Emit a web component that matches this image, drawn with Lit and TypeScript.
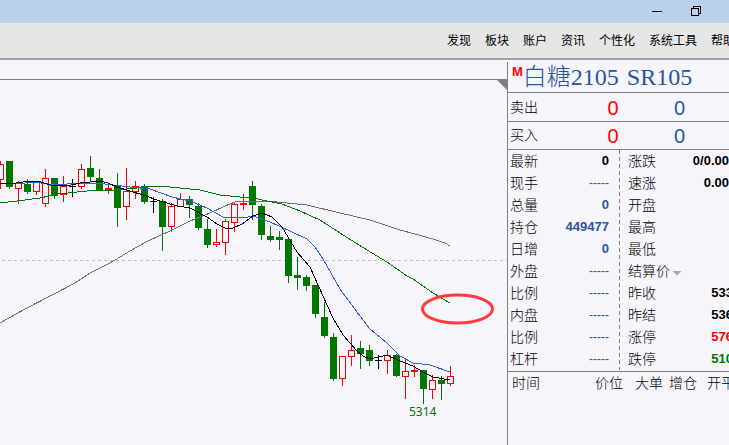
import { LitElement, html, svg, css, nothing } from "lit";
import { customElement } from "lit/decorators.js";
import { classMap } from "lit/directives/class-map.js";

type Kind = "up" | "down" | "flat-up" | "doji";
// high, body top, body bottom, low, kind
type Candle = [number, number, number, number, Kind];

const STEP = 9;

const CANDLES: Candle[] = [
  [161, 164, 180, 189, "up"],
  [161, 161, 187, 189, "down"],
  [181, 183, 189, 204, "up"],
  [179, 184, 192, 194, "down"],
  [181, 181, 192, 195, "up"],
  [169, 178, 204, 207, "up"],
  [178, 178, 196, 199, "down"],
  [176, 186, 195, 202, "up"],
  [179, 186, 187, 197, "doji"],
  [164, 169, 187, 189, "up"],
  [156, 168, 177, 181, "down"],
  [169, 178, 190, 190, "down"],
  [183, 188, 190, 194, "flat-up"],
  [173, 186, 208, 227, "down"],
  [168, 191, 207, 220, "up"],
  [181, 186, 192, 199, "up"],
  [184, 186, 202, 204, "down"],
  [197, 201, 202, 213, "doji"],
  [199, 201, 227, 251, "down"],
  [203, 206, 227, 232, "up"],
  [193, 199, 207, 207, "up"],
  [196, 199, 205, 218, "down"],
  [203, 206, 228, 230, "down"],
  [219, 229, 245, 248, "down"],
  [229, 242, 245, 247, "up"],
  [219, 221, 243, 255, "up"],
  [203, 204, 223, 232, "up"],
  [194, 203, 205, 210, "flat-up"],
  [181, 186, 205, 220, "down"],
  [204, 206, 235, 240, "down"],
  [226, 236, 240, 242, "down"],
  [231, 237, 240, 250, "down"],
  [239, 239, 276, 283, "down"],
  [257, 275, 278, 290, "down"],
  [275, 277, 286, 291, "down"],
  [285, 285, 314, 318, "down"],
  [302, 317, 336, 338, "down"],
  [333, 337, 379, 381, "down"],
  [356, 356, 379, 386, "up"],
  [335, 350, 357, 366, "up"],
  [341, 348, 354, 369, "down"],
  [345, 350, 361, 366, "down"],
  [355, 360, 361, 369, "doji"],
  [350, 355, 361, 374, "up"],
  [354, 355, 376, 377, "down"],
  [358, 371, 377, 399, "up"],
  [365, 370, 372, 377, "flat-up"],
  [370, 370, 389, 404, "down"],
  [375, 380, 390, 399, "up"],
  [376, 380, 384, 400, "down"],
  [366, 376, 384, 386, "up"],
];

const AVERAGES = [
  {
    name: "ma-long",
    points:
      "0,323 25,309 52,295 75,283 90,273 110,263 130,251 148,241 170,231 190,221 200,217 210,213 225,206 235,202 250,201 277,202 307,205 340,213 370,220 400,230 415,234 433,239 445,243 450,246",
  },
  {
    name: "ma-mid",
    points:
      "0,203 17,201 40,198 58,194 87,191 117,190 137,188 150,186 170,187 200,190 220,195 240,197 253,198 267,201 282,204 300,211 320,220 340,233 367,250 387,262 407,276 413,279 433,293 450,303",
  },
  {
    name: "ma-short",
    points:
      "0,183 17,184 33,182 57,185 77,183 97,183 113,185 130,187 150,189 172,197 190,201 207,208 223,217 243,218 253,216 270,222 290,231 307,239 315,247 323,259 340,289 357,312 370,329 387,343 400,356 413,363 430,365 450,372",
  },
  {
    name: "ma-fast",
    points:
      "0,183 10,184 23,182 38,181 50,185 67,186 80,183 100,181 108,183 117,187 130,191 143,195 160,201 177,206 190,208 207,217 217,224 225,228 233,228 242,224 253,216 262,213 272,217 282,227 297,252 310,267 323,296 333,318 343,335 357,351 363,356 370,359 387,355 400,361 413,366 423,372 433,377 450,380",
  },
];

@customElement("kline-chart")
export class KlineChart extends LitElement {
  static styles = css`
    :host {
      display: block;
      position: relative;
      overflow: hidden;
      flex: 1;
      min-width: 0;
    }
    .plot {
      display: block;
      width: 100%;
      height: 100%;
      min-height: 380px;
      shape-rendering: crispEdges;
    }
    .frame { stroke: #808080; }
    .grid { stroke: #bdbdc1; stroke-dasharray: 3 3; }
    .up { fill: #f6f5fb; stroke: #f00; }
    .red { fill: #f00; }
    .green { fill: #007800; }
    .black { fill: #000; }
    .ma { fill: none; stroke-width: 1; }
    .ma-long { stroke: #707070; }
    .ma-mid { stroke: #007800; }
    .ma-short { stroke: #2f5fe0; }
    .ma-fast { stroke: #000; }
    .low-label {
      font: 12px "Noto Sans", sans-serif;
      fill: #007800;
    }
    .marker {
      fill: none;
      stroke: #ff3b3b;
      stroke-width: 3;
      shape-rendering: auto;
    }
    .corner {
      position: absolute;
      top: 18px;
      right: 0;
      width: 10px;
      height: 10px;
      background: #808080;
      clip-path: polygon(0 0, 100% 0, 100% 100%);
    }
  `;

  private candle([high, top, bottom, low, kind]: Candle, i: number) {
    const x = i * STEP;
    const tone = kind === "down" ? "green" : kind === "doji" ? "black" : "red";
    return svg`
      <rect class=${tone} x=${x} y=${high} width="1" height=${low - high}></rect>
      ${
        kind === "up"
          ? svg`<rect class="up" x=${x - 2.5} y=${top + 0.5} width="6" height=${bottom - top - 1}></rect>`
          : svg`<rect class=${tone} x=${x - 3} y=${top} width="7" height=${bottom - top}></rect>`
      }`;
  }

  render() {
    return html`
      <svg class="plot" role="img" aria-label="K线图">
        <g transform="translate(0 -62)">
          <line class="frame" x1="0" y1="79.5" x2="100%" y2="79.5"></line>
          <line class="grid" x1="2" y1="260.5" x2="100%" y2="260.5"></line>
          ${CANDLES.map((c, i) => this.candle(c, i))}
          ${AVERAGES.map((a) => svg`<polyline class="ma ${a.name}" points=${a.points}></polyline>`)}
          <text class="low-label" x="409" y="416">5314</text>
          <ellipse class="marker" cx="457.5" cy="309" rx="35" ry="14"></ellipse>
        </g>
      </svg>
      <span class="corner"></span>
    `;
  }
}

interface Row {
  label: string;
  value: string;
  tone?: string;
  menu?: boolean;
}

const LEFT: Row[] = [
  { label: "最新", value: "0", tone: "ink" },
  { label: "现手", value: "-----", tone: "none" },
  { label: "总量", value: "0" },
  { label: "持仓", value: "449477" },
  { label: "日增", value: "0" },
  { label: "外盘", value: "-----", tone: "none" },
  { label: "比例", value: "-----", tone: "none" },
  { label: "内盘", value: "-----", tone: "none" },
  { label: "比例", value: "-----", tone: "none" },
  { label: "杠杆", value: "-----", tone: "none" },
];

const RIGHT: Row[] = [
  { label: "涨跌", value: "0/0.00", tone: "ink change" },
  { label: "速涨", value: "0.00", tone: "ink change" },
  { label: "开盘", value: "" },
  { label: "最高", value: "" },
  { label: "最低", value: "" },
  { label: "结算价", value: "", menu: true },
  { label: "昨收", value: "533", tone: "ink" },
  { label: "昨结", value: "536", tone: "ink" },
  { label: "涨停", value: "576", tone: "rise" },
  { label: "跌停", value: "510", tone: "fall" },
];

@customElement("quote-panel")
export class QuotePanel extends LitElement {
  static styles = css`
    :host {
      display: block;
      flex: 0 0 221px;
      overflow: hidden;
      border-left: 1px solid #808080;
      color: #000;
      font: 300 14px/22px "Liberation Sans", "Noto Sans CJK SC", sans-serif;
    }
    .title {
      display: flex;
      height: 30px;
      margin: 0;
      padding-left: 4px;
      border-bottom: 1px solid #808080;
      color: #28569e;
      font: 300 24px/30px "Liberation Serif", "Noto Sans CJK SC", serif;
      white-space: nowrap;
    }
    .main-mark {
      color: #f00;
      font: bold 13px/20px "Liberation Sans", sans-serif;
    }
    .code { margin-left: 8px; }
    table {
      border-collapse: collapse;
      table-layout: fixed;
    }
    th, td {
      padding: 0;
      font-weight: 300;
      text-align: left;
      white-space: nowrap;
    }
    .bids { width: 100%; }
    .bids tr { height: 28px; border-bottom: 1px solid #808080; }
    .bids th { width: 70px; padding-left: 2px; }
    .bids td {
      width: 66px;
      padding-top: 2px;
      font-size: 20px;
      font-weight: 400;
      text-align: center;
    }
    .bids td:last-child { width: auto; padding-left: 28px; text-align: left; }
    .sell-price { color: #f00; }
    .volume { color: #28569e; }
    .details {
      display: flex;
      width: 225px;
      padding-bottom: 1px;
      border-bottom: 1px solid #808080;
    }
    .left { width: 111px; }
    .right { width: 113px; }
    .divider {
      width: 1px;
      background: repeating-linear-gradient(#808080 0 4px, transparent 4px 7px);
    }
    .details tr { height: 22px; }
    .details td {
      color: #28569e;
      font-size: 13px;
      font-weight: bold;
      text-align: right;
    }
    .left th { width: 40px; padding-left: 2px; }
    .left td { padding-right: 10px; }
    .right th { width: 56px; padding-left: 8px; }
    .details .ink { color: #000; }
    .details .rise { color: #f00; }
    .details .fall { color: #007800; }
    .details .none { font-size: 12px; font-weight: 400; }
    .details .change { padding-right: 4px; }
    .pick {
      display: flex;
      align-items: center;
      gap: 2px;
      padding: 0;
      border: 0;
      background: none;
      color: inherit;
      font: inherit;
    }
    .caret {
      width: 10px;
      height: 5px;
      margin-top: 5px;
      background: #a8a8a8;
      clip-path: polygon(0 0, 100% 0, 50% 100%);
    }
    .ticks { width: 240px; }
    .ticks th { padding-left: 4px; line-height: 22px; }
    .time { width: 79px; }
    .price { width: 36px; }
    .lot { width: 30px; }
    .open { width: 34px; }
  `;

  private rows(rows: Row[], side: string) {
    return html`<table class=${side}>
      ${rows.map(
        (r) => html`<tr>
          <th scope="row">
            ${r.menu
              ? html`<button class="pick" type="button">${r.label}<span class="caret"></span></button>`
              : r.label}
          </th>
          <td class=${r.tone ?? nothing}>${r.value}</td>
        </tr>`
      )}
    </table>`;
  }

  render() {
    return html`
      <h1 class="title">
        <span class="main-mark">M</span>
        <span>白糖2105</span>
        <span class="code">SR105</span>
      </h1>
      <table class="bids">
        ${["卖出", "买入"].map(
          (label) => html`<tr>
            <th scope="row">${label}</th>
            <td class="sell-price">0</td>
            <td class="volume">0</td>
          </tr>`
        )}
      </table>
      <div class="details">
        ${this.rows(LEFT, "left")}
        <span class="divider"></span>
        ${this.rows(RIGHT, "right")}
      </div>
      <table class="ticks">
        <tr>
          <th class="time">时间</th>
          <th class="price">价位</th>
          <th class="lot">大单</th>
          <th class="open">增仓</th>
          <th>开平</th>
        </tr>
      </table>
    `;
  }
}

const MENU = ["发现", "板块", "账户", "资讯", "个性化", "系统工具", "帮助"];

@customElement("app-root")
export class AppRoot extends LitElement {
  static styles = css`
    :host {
      display: flex;
      flex-direction: column;
      height: 100vh;
      overflow: hidden;
      background: #f6f5fb;
    }
    .titlebar {
      display: flex;
      flex: none;
      justify-content: flex-end;
      gap: 16px;
      height: 23px;
      padding-right: 21px;
      background: #b9d1ea;
    }
    .window-button {
      display: flex;
      align-items: center;
      justify-content: center;
      width: 23px;
      padding: 0;
      border: 0;
      background: none;
    }
    .window-button svg { fill: none; stroke: #000; shape-rendering: crispEdges; }
    .menu {
      display: flex;
      flex: none;
      justify-content: flex-end;
      height: 35px;
      background: #e6e6e6;
      border-bottom: 2px solid #a0a0a0;
    }
    .menu button {
      flex: none;
      padding: 0 7px 2px;
      border: 0;
      background: none;
      color: #000;
      font: 12px/32px "Noto Sans CJK SC", sans-serif;
    }
    .menu button.last { margin-right: -13px; }
    .workspace {
      display: flex;
      flex: 1;
      min-height: 0;
      padding-top: 2px;
    }
  `;

  render() {
    return html`
      <header class="titlebar">
        <button class="window-button" type="button" aria-label="最小化">
          <svg width="11" height="11"><path d="M0 5.5H10"></path></svg>
        </button>
        <button class="window-button" type="button" aria-label="还原">
          <svg width="11" height="11">
            <path d="M.5 2.5H7.5V9.5H.5ZM2.5 2.5V.5H9.5V7.5H7.5"></path>
          </svg>
        </button>
      </header>
      <nav class="menu">
        ${MENU.map(
          (m, i) => html`<button type="button" class=${classMap({ last: i === MENU.length - 1 })}>${m}</button>`
        )}
      </nav>
      <main class="workspace">
        <kline-chart></kline-chart>
        <quote-panel></quote-panel>
      </main>
    `;
  }
}
